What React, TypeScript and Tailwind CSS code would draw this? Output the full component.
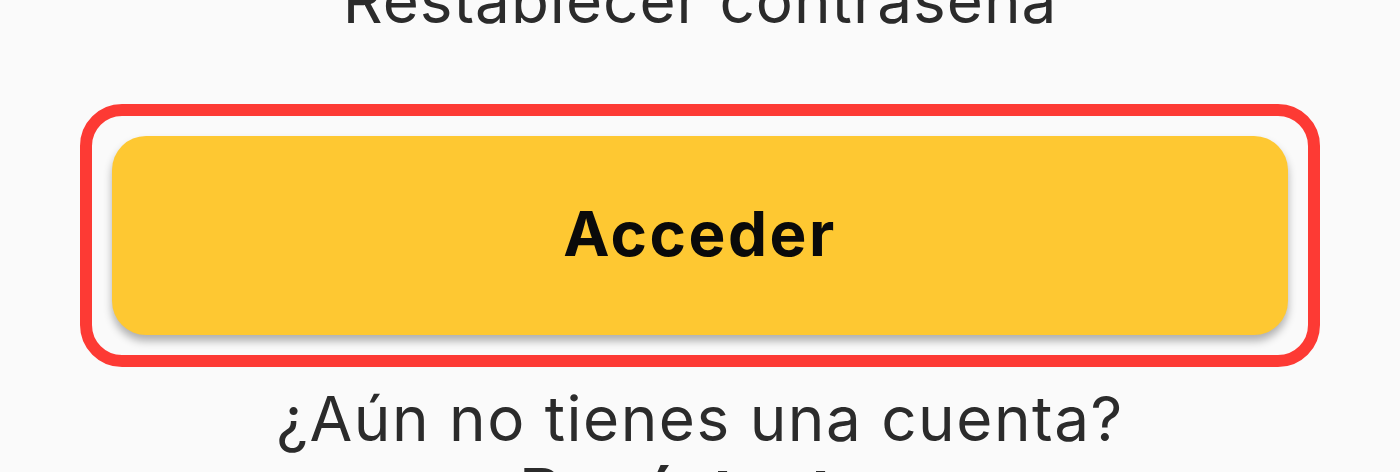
import React from 'react';

const font = { fontFamily: 'Inter, "Noto Sans", sans-serif' };

const App: React.FC = () => {
  return (
    <div className="w-[1400px] h-[472px] overflow-hidden bg-[#fafafa]" style={font}>
      <div className="flex flex-col items-center">
        {/* Forgot password link */}
        <p className="mt-[-35px] text-[62px] leading-[72px] tracking-[1px] text-[#2b2b2b]">
          Restablecer contraseña
        </p>

        {/* Highlighted login button */}
        <div className="mt-[67px] w-[1240px] rounded-[42px] border-[12px] border-[#fd3a34] p-5">
          <button className="flex h-[199px] w-full items-center justify-center rounded-[34px] bg-[#fec832] pb-1 shadow-[0_6px_8px_rgba(0,0,0,0.3)]">
            <span className="text-[62px] font-bold leading-[72px] tracking-[2.5px] text-[#0a0a0a]">Acceder</span>
          </button>
        </div>

        {/* Sign up */}
        <p className="mt-4 text-[62px] leading-[72px] tracking-[1.5px] text-[#2b2b2b]">
          ¿Aún no tienes una cuenta?
        </p>
        <p className="text-[62px] font-bold leading-[72px] tracking-[5px] text-[#2b2b2b]">Regístrate</p>
      </div>
    </div>
  );
};

export default App;
